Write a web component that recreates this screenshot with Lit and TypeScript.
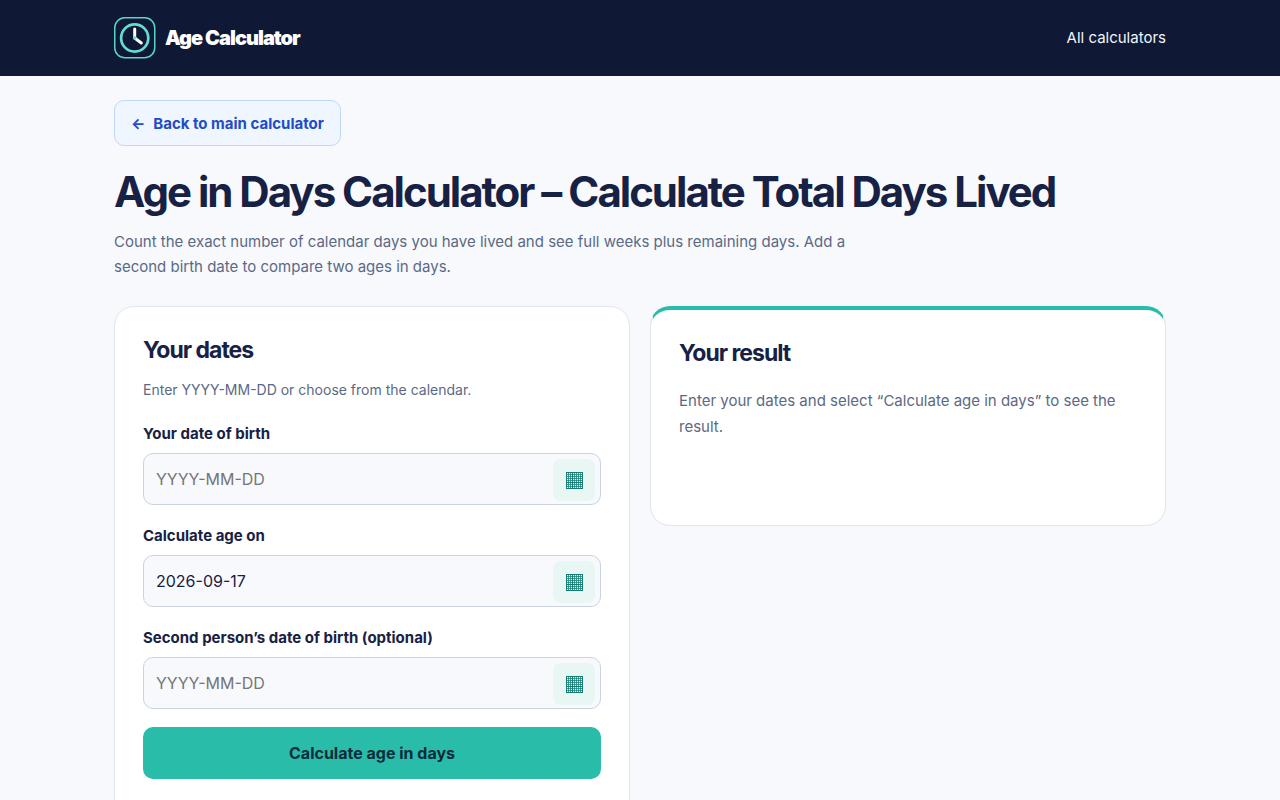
import { LitElement, html, css } from "lit";
import { customElement, property } from "lit/decorators.js";

@customElement("date-field")
class DateField extends LitElement {
  @property() label = "";
  @property() value = "";

  static styles = css`
    :host {
      display: block;
    }
    .label {
      display: block;
      margin-bottom: 6px;
      font-size: 15px;
      line-height: 26px;
      font-weight: 700;
      color: #172144;
    }
    .box {
      display: flex;
      align-items: flex-end;
      box-sizing: border-box;
      height: 52px;
      padding: 0 5px 3px 0;
      border: 1px solid #cbd2e0;
      border-radius: 10px;
      background: #f8f9fd;
    }
    .input {
      flex: 1;
      align-self: center;
      min-width: 0;
      box-sizing: border-box;
      padding: 12px 12px 10px;
      border: 0;
      outline: 0;
      background: transparent;
      font: inherit;
      font-size: 16px;
      color: #172144;
    }
    .input::placeholder {
      color: #757575;
    }
    .pick {
      display: grid;
      place-items: center;
      width: 42px;
      height: 42px;
      padding: 0;
      border: 0;
      border-radius: 8px;
      background: #e8f6f4;
      color: #137d72;
      cursor: pointer;
    }
    .mesh {
      width: 18px;
      height: 18px;
    }
  `;

  render() {
    return html`
      <label class="label" for="date">${this.label}</label>
      <div class="box">
        <input class="input" id="date" type="text" placeholder="YYYY-MM-DD" .value=${this.value} />
        <button class="pick" type="button" aria-label="Open calendar">
          <svg class="mesh" viewBox="0 0 18 18" fill="none" stroke="currentColor" aria-hidden="true">
            <path
              d="M1.5 1v17M3.5 1v17M5.5 1v17M7.5 1v17M9.5 1v17M11.5 1v17M13.5 1v17M15.5 1v17M17.5 1v17"
              stroke-opacity="0.75"
            />
            <path
              d="M1 1.5h17M1 3.5h17M1 5.5h17M1 7.5h17M1 9.5h17M1 11.5h17M1 13.5h17M1 15.5h17M1 17.5h17"
              stroke-opacity="0.75"
            />
            <path d="M1.5 1.5h16v16h-16zM7.5 1v17M1 11.5h17" />
          </svg>
        </button>
      </div>
    `;
  }
}

@customElement("app-root")
class AppRoot extends LitElement {
  static styles = css`
    :host {
      display: block;
      min-height: 100vh;
      background: #f7f9fd;
      color: #172144;
      font-family: Inter, sans-serif;
      font-size: 16px;
      line-height: 26px;
    }
    .wrap {
      box-sizing: border-box;
      max-width: 1100px;
      margin: 0 auto;
      padding: 0 24px;
    }
    .header {
      background: #0f1834;
    }
    .bar {
      display: flex;
      align-items: center;
      justify-content: space-between;
      min-height: 76px;
    }
    .brand {
      display: flex;
      align-items: center;
      gap: 9px;
      color: #fff;
      font-size: 20px;
      font-weight: 900;
      letter-spacing: -1px;
      text-decoration: none;
    }
    .logo {
      width: 42px;
      height: 42px;
    }
    .nav {
      color: #f1f5fb;
      font-size: 15px;
      text-decoration: none;
    }
    .main {
      padding-top: 24px;
      padding-bottom: 48px;
    }
    .back {
      display: inline-flex;
      align-items: center;
      gap: 8px;
      padding: 11px 16px 9px;
      height: 24px;
      border: 1px solid #bfd7fb;
      border-radius: 10px;
      background: #eff6ff;
      color: #214bc9;
      font-size: 15px;
      line-height: 24px;
      font-weight: 700;
      text-decoration: none;
    }
    .title {
      margin: 22px 0 13px;
      font-size: 42px;
      line-height: 48px;
      font-weight: 700;
      letter-spacing: -2px;
    }
    .lead {
      max-width: 760px;
      margin: 0 0 27px;
      color: #5b6985;
      font-size: 15px;
      line-height: 25px;
    }
    .grid {
      display: grid;
      grid-template-columns: 1fr 1fr;
      align-items: start;
      gap: 20px;
    }
    .card {
      box-sizing: border-box;
      padding: 28px;
      border: 1px solid #e1e6ef;
      border-radius: 20px;
      background: #fff;
    }
    .entry {
      padding-bottom: 36px;
    }
    .result {
      min-height: 220px;
      border-top: 4px solid #29bda9;
    }
    .heading {
      margin: 0;
      font-size: 23px;
      line-height: 30px;
      font-weight: 700;
      letter-spacing: -1px;
    }
    .hint {
      margin: 14px 0 20px;
      color: #5b6985;
      font-size: 14px;
      line-height: 22px;
    }
    .empty {
      margin: 20px 0 0;
      color: #5b6985;
      font-size: 15px;
    }
    .form {
      display: grid;
      gap: 18px;
    }
    .submit {
      height: 52px;
      padding: 0;
      border: 0;
      border-radius: 10px;
      background: #29bda9;
      color: #0d2b3c;
      font: inherit;
      font-weight: 700;
      cursor: pointer;
    }
    @media (max-width: 760px) {
      .grid {
        grid-template-columns: 1fr;
      }
    }
  `;

  render() {
    return html`
      <header class="header">
        <div class="wrap bar">
          <a class="brand" href="#">
            <svg class="logo" viewBox="0 0 42 42" fill="none" aria-hidden="true">
              <rect x="0.75" y="0.75" width="40" height="40" rx="10" stroke="#5ad3c8" stroke-width="1.5" />
              <circle cx="20.7" cy="21" r="13.6" stroke="#65dccf" stroke-width="2.7" />
              <path d="M20.7 12v9l6.6 5" stroke="#fff" stroke-width="3" stroke-linecap="round" stroke-linejoin="round" />
              <circle cx="20.7" cy="21" r="1.8" fill="#65dccf" />
            </svg>
            <span>Age Calculator</span>
          </a>
          <a class="nav" href="#">All calculators</a>
        </div>
      </header>
      <main class="wrap main">
        <a class="back" href="#"><span aria-hidden="true">←</span><span>Back to main calculator</span></a>
        <h1 class="title">Age in Days Calculator – Calculate Total Days Lived</h1>
        <p class="lead">
          Count the exact number of calendar days you have lived and see full weeks plus remaining days. Add a second
          birth date to compare two ages in days.
        </p>
        <div class="grid">
          <section class="card entry">
            <h2 class="heading">Your dates</h2>
            <p class="hint">Enter YYYY-MM-DD or choose from the calendar.</p>
            <form class="form" @submit=${(e: Event) => e.preventDefault()}>
              <date-field label="Your date of birth"></date-field>
              <date-field label="Calculate age on" value="2026-09-17"></date-field>
              <date-field label="Second person’s date of birth (optional)"></date-field>
              <button class="submit" type="submit">Calculate age in days</button>
            </form>
          </section>
          <section class="card result">
            <h2 class="heading">Your result</h2>
            <p class="empty">Enter your dates and select “Calculate age in days” to see the result.</p>
          </section>
        </div>
      </main>
    `;
  }
}
